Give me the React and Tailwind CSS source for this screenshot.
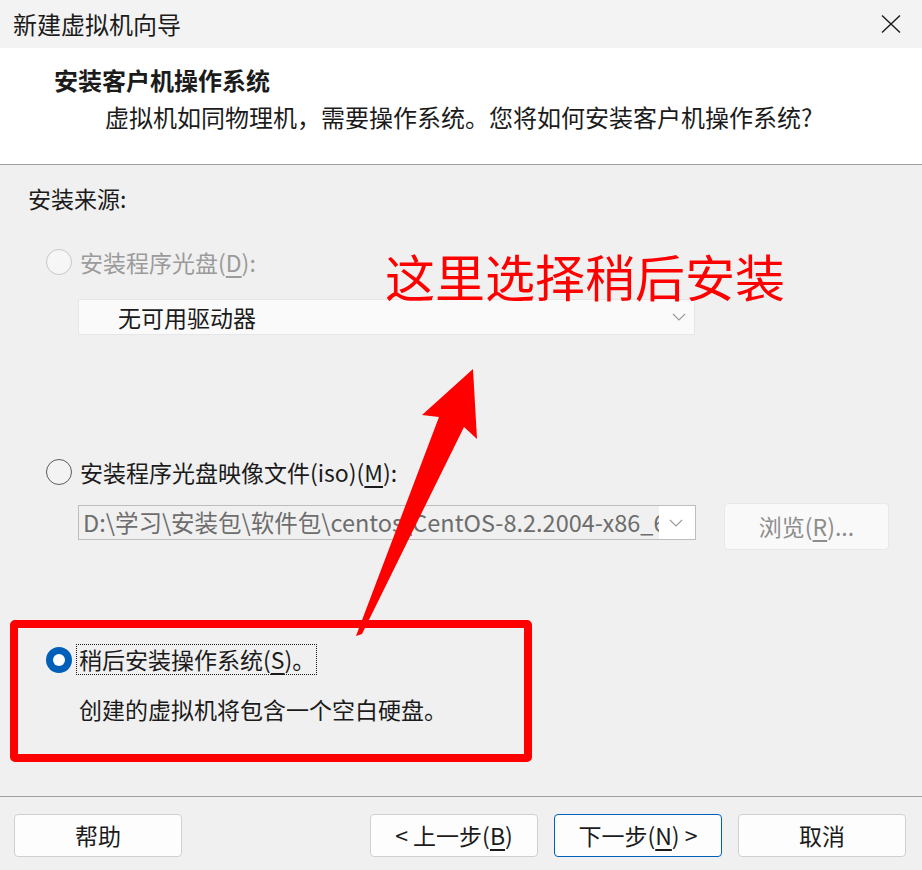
import React from 'react'

const font = { fontFamily: '"Noto Sans CJK SC", "Noto Sans", sans-serif' }

function Radio({ state }) {
  if (state === 'checked') {
    return (
      <span className="flex h-[26px] w-[26px] shrink-0 items-center justify-center rounded-full bg-[#005fb8]">
        <span className="h-[12px] w-[12px] rounded-full bg-white" />
      </span>
    )
  }
  if (state === 'disabled') {
    return <span className="h-[26px] w-[26px] shrink-0 rounded-full border border-[#c8c8c8] bg-[#f6f6f6]" />
  }
  return <span className="h-[26px] w-[26px] shrink-0 rounded-full border-[1.5px] border-[#5c5c5c] bg-[#f3f3f3]" />
}

function Chevron() {
  return (
    <svg width="14" height="8" viewBox="0 0 14 8" className="shrink-0">
      <path d="M1 1 L7 7 L13 1" fill="none" stroke="#9a9a9a" strokeWidth="1.1" />
    </svg>
  )
}

function FooterButton({ children, primary }) {
  return (
    <button
      className={`flex h-[43px] w-[168px] items-center justify-center rounded-[4px] border bg-[#fdfdfd] text-[23px] leading-none text-[#1b1b1b] ${
        primary ? 'border-[#005fb8]' : 'border-[#d0d0d0]'
      }`}
    >
      {children}
    </button>
  )
}

export default function App() {
  return (
    <div className="relative h-[870px] w-[922px] overflow-hidden bg-[#f0f0f0] text-[#1b1b1b]" style={font}>
      {/* Title bar */}
      <div className="flex h-[48px] items-center justify-between bg-[#f3f3f3] pl-[13px] pr-[21px]">
        <span className="text-[24px] leading-none">新建虚拟机向导</span>
        <svg width="20" height="18" viewBox="0 0 20 18">
          <path d="M1 0.5 L19 17.5 M19 0.5 L1 17.5" stroke="#1b1b1b" strokeWidth="1.4" />
        </svg>
      </div>

      {/* Header */}
      <div className="h-[117px] border-b border-[#a0a0a0] bg-white pt-[16px]">
        <div className="pl-[54px] text-[24px] font-bold leading-[32px]">安装客户机操作系统</div>
        <div className="mt-[5px] pl-[105px] text-[24px] leading-[32px]">
          虚拟机如同物理机，需要操作系统。您将如何安装客户机操作系统?
        </div>
      </div>

      {/* Body */}
      <div className="h-[631px] pt-[18px]">
        <div className="pl-[28px] text-[23px] leading-[30px]">安装来源:</div>

        <div className="mt-[34px] flex h-[30px] items-center gap-[8px] pl-[46px]">
          <Radio state="disabled" />
          <span className="text-[23px] leading-[30px] text-[#9b9b9b]">
            安装程序光盘(<span className="underline underline-offset-[4px]">D</span>):
          </span>
        </div>

        <div className="ml-[78px] mt-[22px] flex h-[36px] w-[617px] items-center justify-between border border-[#e6e6e6] bg-[#fafafa] pl-[39px] pr-[8px]">
          <span className="text-[23px] leading-none">无可用驱动器</span>
          <Chevron />
        </div>

        <div className="mt-[122px] flex h-[30px] items-center gap-[8px] pl-[46px]">
          <Radio state="unchecked" />
          <span className="text-[23px] leading-[30px]">
            安装程序光盘映像文件(iso)(<span className="underline underline-offset-[4px]">M</span>):
          </span>
        </div>

        <div className="mt-[16px] flex items-start pl-[78px]">
          <div className="mt-[2px] flex h-[35px] w-[618px] items-stretch border border-[#bdbdbd] bg-white">
            <div className="flex w-[580px] items-center overflow-hidden whitespace-nowrap bg-[#f0f0f0] pl-[4px] text-[23.5px] leading-none text-[#6d6d6d]">
              D:\学习\安装包\软件包\centos\CentOS-8.2.2004-x86_64
            </div>
            <div className="flex flex-1 items-center justify-center pr-[2px]">
              <Chevron />
            </div>
          </div>
          <button className="ml-[28px] flex h-[47px] w-[165px] items-center justify-center rounded-[4px] border border-[#e8e8e8] bg-[#f9f9f9] text-[23px] leading-none text-[#8d8d8d]">
            浏览(<span className="underline underline-offset-[4px]">R</span>)...
          </button>
        </div>

        {/* Highlighted option */}
        <div className="ml-[10px] mt-[70px] h-[142px] w-[522px] rounded-[5px] border-[8px] border-[#ff0000] pl-[28px] pt-[16px]">
          <div className="flex h-[31px] items-center gap-[4px]">
            <Radio state="checked" />
            <span className="border border-dotted border-[#1b1b1b] pl-[2px] pr-[1px] text-[23px] leading-[29px]">
              稍后安装操作系统(<span className="underline underline-offset-[4px]">S</span>)。
            </span>
          </div>
          <div className="mt-[19px] pl-[33px] text-[23px] leading-[30px]">创建的虚拟机将包含一个空白硬盘。</div>
        </div>
      </div>

      {/* Footer */}
      <div className="flex h-[73px] border-t border-[#a0a0a0] pl-[14px] pr-[16px] pt-[17px]">
        <FooterButton>帮助</FooterButton>
        <div className="ml-auto flex gap-[16px]">
          <FooterButton>
            &lt; 上一步(<span className="underline underline-offset-[4px]">B</span>)
          </FooterButton>
          <FooterButton primary>
            下一步(<span className="underline underline-offset-[4px]">N</span>) &gt;
          </FooterButton>
          <FooterButton>取消</FooterButton>
        </div>
      </div>

      {/* Annotation */}
      <div className="absolute left-[385px] top-[250px] text-[50px] leading-[50px] text-[#ff0000]">这里选择稍后安装</div>
      <svg className="pointer-events-none absolute left-0 top-0" width="922" height="870" viewBox="0 0 922 870">
        <polygon points="356,636 439,417 422,415 473,369 477,439 464,427 362,634" fill="#ff0000" />
      </svg>
    </div>
  )
}
